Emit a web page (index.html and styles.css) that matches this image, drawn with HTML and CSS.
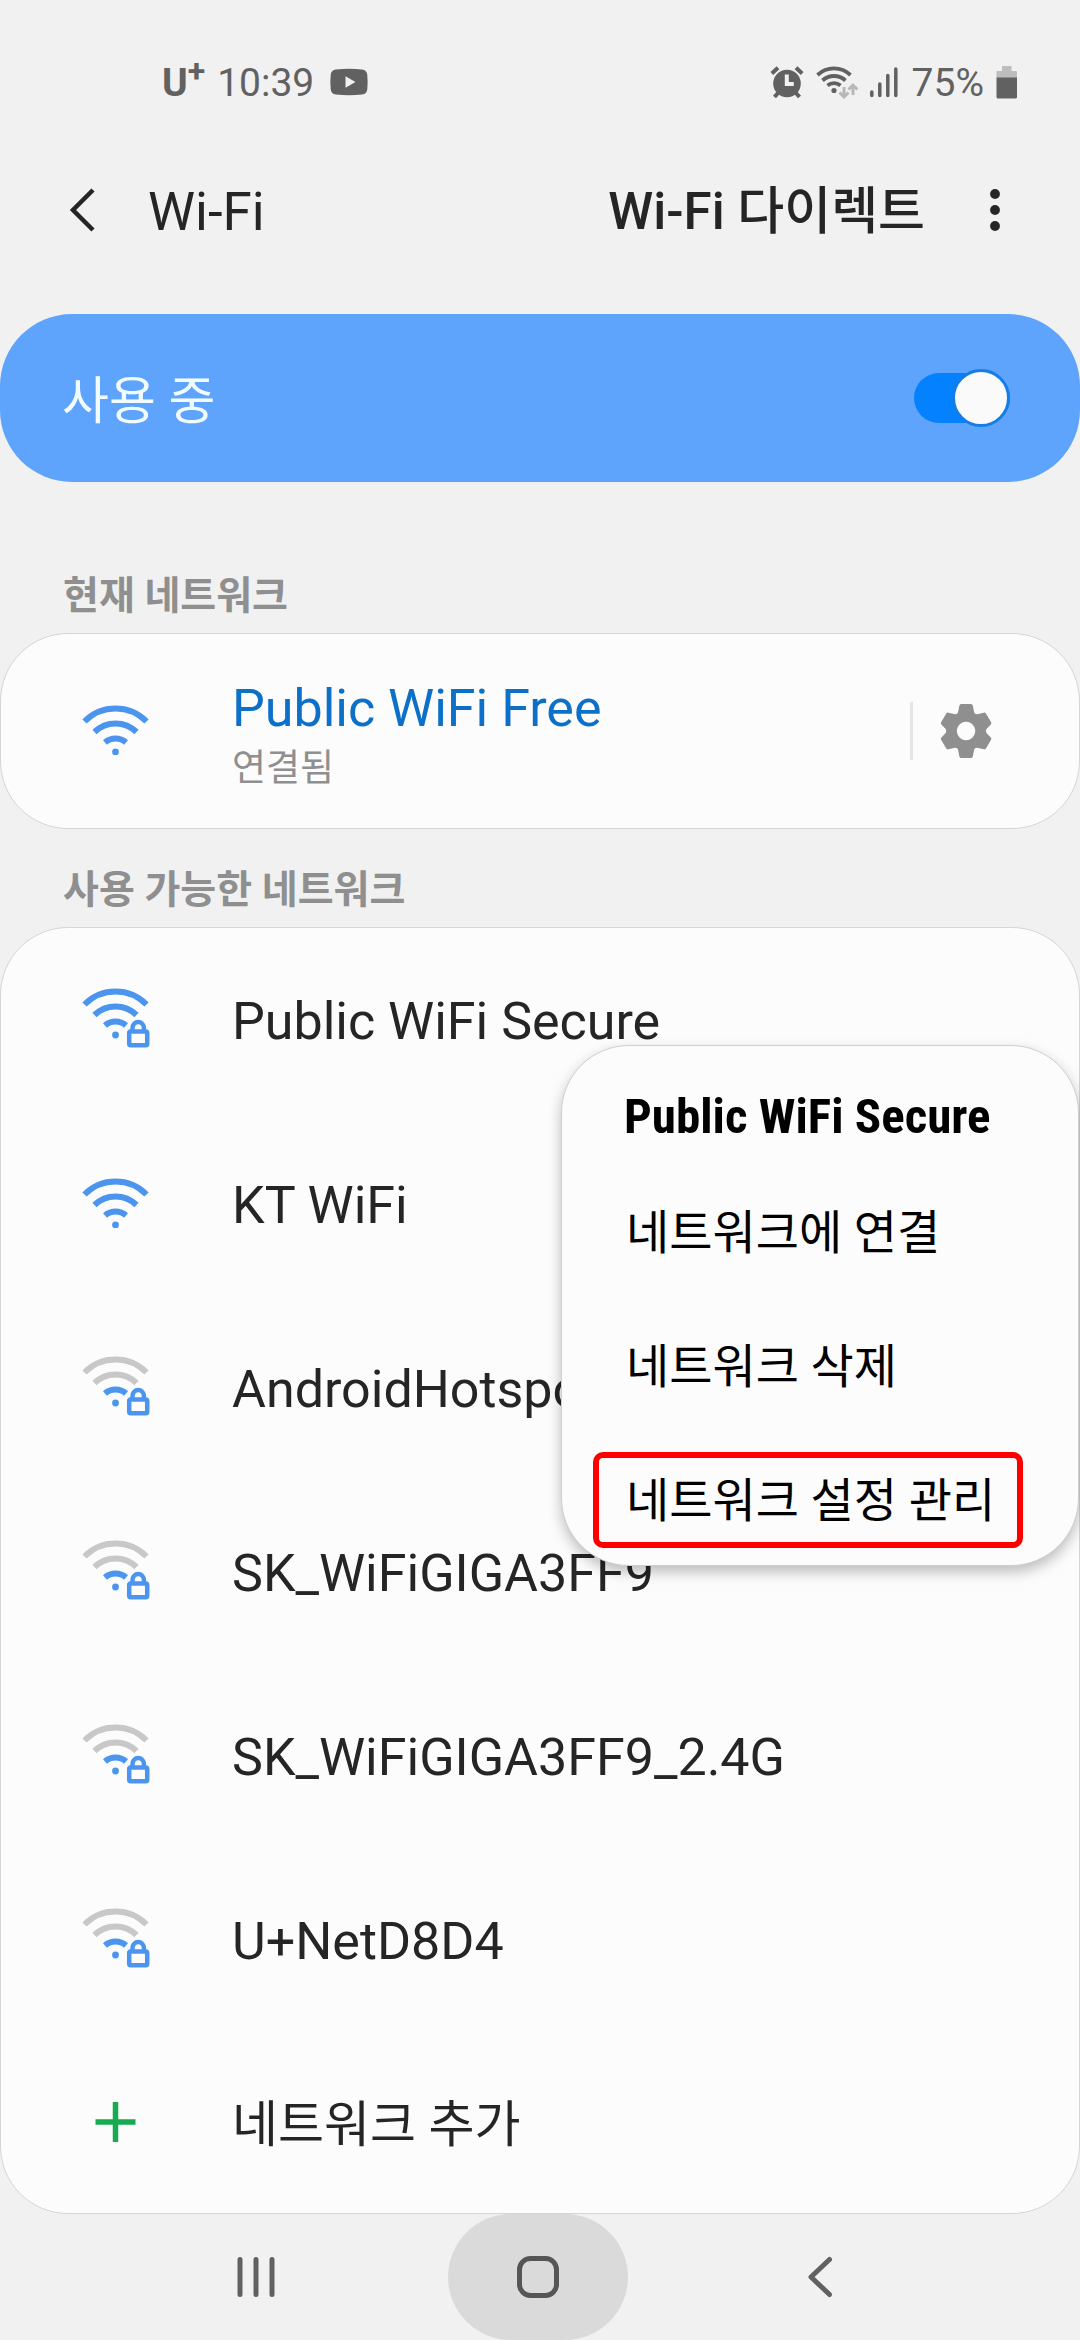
FILE: index.html
```html
<!DOCTYPE html>
<html lang="ko">
<head>
<meta charset="utf-8">
<meta name="viewport" content="width=device-width, initial-scale=1">
<title>Wi-Fi</title>
<link rel="stylesheet" href="styles.css">
</head>
<body>
<svg class="defs" aria-hidden="true">
  <symbol id="wifi-arcs" viewBox="0 0 70 60">
    <g fill="none" stroke-width="6">
      <path class="arc-far" d="M4.500 16.500A43.500 43.500 0 0 1 66.500 16.500"/>
      <path class="arc-far" d="M14.500 27A30 30 0 0 1 56.500 27"/>
      <path class="arc-near" d="M25 37.500A16 16 0 0 1 46 37.500"/>
    </g>
    <circle class="dot" cx="35.500" cy="47" r="3.400"/>
  </symbol>
  <symbol id="lock" viewBox="0 0 70 60">
    <g fill="none" stroke="#4b95ee" stroke-width="4.500">
      <path d="M52.500 43v-3a5.700 6 0 0 1 11.400 0V43"/>
      <rect x="49.200" y="43.500" width="18" height="13.800" rx="1.500"/>
    </g>
  </symbol>
</svg>

<div class="screen">
  <div class="status-bar">
    <div class="status-group">
      <span class="carrier">U<sup>+</sup></span>
      <span class="clock">10:39</span>
      <svg class="icon-video" width="38" height="28" viewBox="0 0 38 28"><path fill="#616161" d="M6 1.500Q19 0 32 1.500Q37 2 37.300 7Q38 14 37.300 21Q37 26 32 26.500Q19 28 6 26.500Q1 26 .7 21Q0 14 .7 7Q1 2 6 1.500Z"/><path fill="#f1f1f1" d="M15.500 8.300v11.400L25.500 14z"/></svg>
    </div>
    <div class="status-group status-right">
      <svg width="34" height="34" viewBox="0 0 34 34"><g stroke="#616161" stroke-width="4"><path d="M1.800 8.500L8 2.800M32.200 8.500L26 2.800M8 28L4.500 32M26 28l3.500 4"/></g><circle cx="17" cy="18.500" r="13.800" fill="#616161"/><path d="M16.800 9.500v9.500h7" fill="none" stroke="#f1f1f1" stroke-width="4"/></svg>
      <svg width="42" height="34" viewBox="0 0 42 34"><g fill="none" stroke="#616161" stroke-width="3.800"><path d="M1.500 10A24 24 0 0 1 34.500 10"/><path d="M6.500 15.500A17 17 0 0 1 29.500 15.500"/><path d="M11.500 20.500A10 10 0 0 1 24.500 20.500"/></g><circle cx="18" cy="25.500" r="2.600" fill="#616161"/><g fill="none" stroke="#b8b8b8" stroke-width="3"><path d="M28 22v9M23.500 27.500l4.500 4.500 4.500-4.500M37 30V20M32.500 24.500l4.500-4.500 4.500 4.500"/></g></svg>
      <svg width="28" height="34" viewBox="0 0 28 34"><path d="M1.800 27v3.500M9.800 19v11.500M17.800 10.500v20M25.800 4v26.500" stroke="#616161" stroke-width="3.500" stroke-linecap="round"/></svg>
      <span class="battery-text">75%</span>
      <svg width="22" height="34" viewBox="0 0 22 34"><path fill="#bdbdbd" d="M6 1h9.500v5H20q1 0 1 1v6H.5V7q0-1 1-1H6z"/><path fill="#616161" d="M.5 12.500H21V32q0 1.500-1.500 1.500H2Q.5 33.500.5 32z"/></svg>
    </div>
  </div>

  <header class="app-bar">
    <button class="icon-button" type="button" aria-label="뒤로">
      <svg width="28" height="44" viewBox="0 0 28 44"><path d="M25 2L5 22l20 20" fill="none" stroke="#252525" stroke-width="4.500"/></svg>
    </button>
    <h1 class="title">Wi-Fi</h1>
    <a class="direct-link" href="#direct">Wi-Fi 다이렉트</a>
    <button class="icon-button" type="button" aria-label="옵션 더보기">
      <svg width="12" height="44" viewBox="0 0 12 44"><g fill="#252525"><circle cx="6" cy="6" r="4.900"/><circle cx="6" cy="22" r="4.900"/><circle cx="6" cy="38" r="4.900"/></g></svg>
    </button>
  </header>

  <label class="master-switch">
    <span class="switch-label">사용 중</span>
    <input class="toggle" type="checkbox" role="switch" checked>
  </label>

  <main>
    <h2 class="section-title">현재 네트워크</h2>
    <section class="card current">
      <svg class="wifi" viewBox="0 0 70 50"><use href="#wifi-arcs" width="70" height="60"/></svg>
      <div class="network-text">
        <span class="network-name connected">Public WiFi Free</span>
        <span class="network-state">연결됨</span>
      </div>
      <button class="settings" type="button" aria-label="네트워크 설정">
        <svg width="54" height="56" viewBox="0 0 54 56"><path fill="#8f8f8f" fill-rule="evenodd" d="M22.200 1h9.800q1.500 0 1.800 1.500l1.400 7Q36 11.500 38 11.300l6.800-1.600q1.500-.4 2.300 1l5 8.600q.7 1.300-.3 2.300L47.500 26q-1.300 2 0 4l4.300 4.400q1 1 .3 2.300l-5 8.600q-.8 1.400-2.300 1L38 44.700q-2-.2-2.800 1.800l-1.400 7Q33.500 55 32 55h-9.800q-1.500 0-1.800-1.500l-1.400-7q-.8-2-2.800-1.800l-6.800 1.600q-1.500.4-2.300-1l-5-8.600q-.7-1.300.3-2.300L6.700 30q1.300-2 0-4l-4.300-4.400q-1-1-.3-2.300l5-8.600q.8-1.400 2.300-1l6.800 1.600q2 .2 2.800-1.800l1.400-7Q20.700 1 22.200 1zM27 18.800a9.200 9.200 0 1 0 .1 0z"/></svg>
      </button>
    </section>

    <h2 class="section-title">사용 가능한 네트워크</h2>
    <section class="card available">
      <ul class="network-list">
        <li><button class="network" type="button"><svg class="wifi locked" viewBox="0 0 70 60"><use href="#wifi-arcs"/><use href="#lock"/></svg><span class="network-name">Public WiFi Secure</span></button></li>
        <li><button class="network" type="button"><svg class="wifi" viewBox="0 0 70 50"><use href="#wifi-arcs" width="70" height="60"/></svg><span class="network-name">KT WiFi</span></button></li>
        <li><button class="network" type="button"><svg class="wifi locked weak" viewBox="0 0 70 60"><use href="#wifi-arcs"/><use href="#lock"/></svg><span class="network-name">AndroidHotspot</span></button></li>
        <li><button class="network" type="button"><svg class="wifi locked weak" viewBox="0 0 70 60"><use href="#wifi-arcs"/><use href="#lock"/></svg><span class="network-name">SK_WiFiGIGA3FF9</span></button></li>
        <li><button class="network" type="button"><svg class="wifi locked weak" viewBox="0 0 70 60"><use href="#wifi-arcs"/><use href="#lock"/></svg><span class="network-name">SK_WiFiGIGA3FF9_2.4G</span></button></li>
        <li><button class="network" type="button"><svg class="wifi locked weak" viewBox="0 0 70 60"><use href="#wifi-arcs"/><use href="#lock"/></svg><span class="network-name">U+NetD8D4</span></button></li>
        <li><button class="network add" type="button"><svg class="wifi" viewBox="0 0 70 50"><path d="M15.500 25h40M35.500 5v40" stroke="#16ab50" stroke-width="5.500"/></svg><span class="network-name">네트워크 추가</span></button></li>
      </ul>
      <div class="popup" role="menu">
        <strong class="popup-title">Public WiFi Secure</strong>
        <button class="popup-item" type="button" role="menuitem">네트워크에 연결</button>
        <button class="popup-item" type="button" role="menuitem">네트워크 삭제</button>
        <button class="popup-item highlighted" type="button" role="menuitem">네트워크 설정 관리</button>
      </div>
    </section>
  </main>

  <nav class="nav-bar">
    <button class="nav-button" type="button" aria-label="최근 앱"><svg width="42" height="44" viewBox="0 0 42 44"><path d="M5 4.500v35M21 4.500v35M37 4.500v35" stroke="#616161" stroke-width="5" stroke-linecap="round"/></svg></button>
    <button class="nav-button pressed" type="button" aria-label="홈"><svg width="44" height="44" viewBox="0 0 44 44"><rect x="3.500" y="3.500" width="37" height="37" rx="11" fill="none" stroke="#555" stroke-width="5"/></svg></button>
    <button class="nav-button" type="button" aria-label="뒤로"><svg width="26" height="44" viewBox="0 0 26 44"><path d="M22.500 4.500L4 22l18.500 17.500" fill="none" stroke="#616161" stroke-width="5" stroke-linecap="round" stroke-linejoin="round"/></svg></button>
  </nav>
</div>
</body>
</html>
```
FILE: styles.css
```css
* { box-sizing: border-box; }

body {
  margin: 0;
  background: #f1f1f1;
  color: #252525;
  font-family: Roboto, "Noto Sans CJK KR", sans-serif;
}

button {
  margin: 0;
  padding: 0;
  border: 0;
  background: none;
  color: inherit;
  font: inherit;
  text-align: left;
}

svg { display: block; flex: none; }

.defs { position: absolute; width: 0; height: 0; }

.screen {
  display: flex;
  flex-direction: column;
  min-height: 100vh;
}

/* Status bar */
.status-bar {
  display: flex;
  align-items: center;
  justify-content: space-between;
  height: 164px;
  padding: 0 62px 0 162px;
  color: #616161;
  font-size: 39px;
  line-height: 48px;
}

.status-group { display: flex; align-items: center; gap: 12px; }

.carrier { padding-top: 2px; font-weight: 700; }
.carrier sup { font-size: 32px; line-height: 0; }
.icon-video { margin-left: 4px; }
.clock, .battery-text { padding-top: 2px; }
.battery-text { padding-left: 2px; }

/* Title row */
.app-bar {
  display: flex;
  align-items: center;
  height: 92px;
  margin-bottom: 58px;
  padding: 0 79px 0 68px;
  line-height: 64px;
}

.title {
  flex: 1;
  margin: 0;
  padding: 4px 0 0 52px;
  font-size: 53px;
  font-weight: 400;
}

.direct-link {
  margin-right: 64px;
  padding-top: 4px;
  color: inherit;
  font-size: 51px;
  font-weight: 500;
  text-decoration: none;
}

/* Master switch */
.master-switch {
  display: flex;
  align-items: center;
  justify-content: space-between;
  height: 168px;
  margin-bottom: 80px;
  padding: 0 70px 0 62px;
  border-radius: 72px;
  background: #5ea3fc;
  color: #f2fcff;
  font-size: 51px;
  line-height: 64px;
}

.switch-label { padding-top: 8px; }

.toggle {
  appearance: none;
  display: flex;
  align-items: center;
  justify-content: flex-end;
  width: 96px;
  height: 50px;
  margin: 0;
  border-radius: 25px;
  background: #0381fe;
}

.toggle::before {
  content: "";
  flex: none;
  width: 52px;
  height: 52px;
  border: 3px solid #147de6;
  border-radius: 50%;
  background: #fafafa;
}

/* Sections */
.section-title {
  margin: 0;
  padding: 10px 63px 13px;
  color: #8f8f8f;
  font-size: 39px;
  font-weight: 700;
  line-height: 48px;
}

.card {
  border: 1px solid #d5d5d5;
  border-radius: 68px;
  background: #fcfcfc;
}

.wifi { width: 70px; height: 50px; margin-bottom: 2px; }
.wifi.locked { height: 60px; margin-bottom: 4px; }
.arc-near { stroke: #4b95ee; }
.dot { fill: #4b95ee; }
.weak { --far: #c8c8c8; }
.arc-far { stroke: var(--far, #4b95ee); }

.current {
  display: flex;
  align-items: center;
  gap: 82px;
  height: 196px;
  margin-bottom: 27px;
  padding: 0 86px 0 79px;
}

.network-text {
  display: flex;
  flex: 1;
  flex-direction: column;
  gap: 2px;
  padding-top: 6px;
}

.network-name { padding-top: 4px; font-size: 52px; line-height: 64px; }
.connected { color: #0c70c8; }
.network-state { color: #8f8f8f; font-size: 37px; line-height: 52px; }

.settings {
  display: flex;
  align-items: center;
  height: 58px;
  padding-left: 26px;
  border-left: 3px solid #e5e5e5;
}

.available { position: relative; }

.network-list { margin: 0; padding: 0; list-style: none; }

.network {
  display: flex;
  align-items: center;
  gap: 82px;
  width: 100%;
  height: 184px;
  padding: 0 79px;
}

.network.add { height: 181px; }
.add .network-name { font-size: 50px; }

/* Long-press menu over the list */
.popup {
  position: absolute;
  top: 117px;
  right: 0;
  display: flex;
  flex-direction: column;
  width: 518px;
  padding: 40px 55px 17px 31px;
  border: 1px solid #cfcfcf;
  border-radius: 68px;
  background: #fcfcfc;
  box-shadow: 0 6px 14px rgba(0, 0, 0, 0.25);
  color: #000;
}

.popup-title {
  padding: 2px 0 0 31px;
  font-family: "Roboto Condensed", Roboto, sans-serif;
  font-size: 49px;
  line-height: 58px;
}

.popup-item {
  height: 96px;
  margin-top: 38px;
  padding: 2px 0 0 33px;
  font-size: 47px;
  line-height: 64px;
}

.highlighted {
  padding-left: 27px;
  border: 6px solid #f00;
  border-radius: 10px;
}

/* System navigation */
.nav-bar {
  display: flex;
  justify-content: space-between;
  padding: 0 170px 0 166px;
}

.nav-button {
  display: flex;
  align-items: center;
  justify-content: center;
  width: 180px;
  height: 126px;
  border-radius: 63px;
}

.pressed { background: #dadada; }
```
